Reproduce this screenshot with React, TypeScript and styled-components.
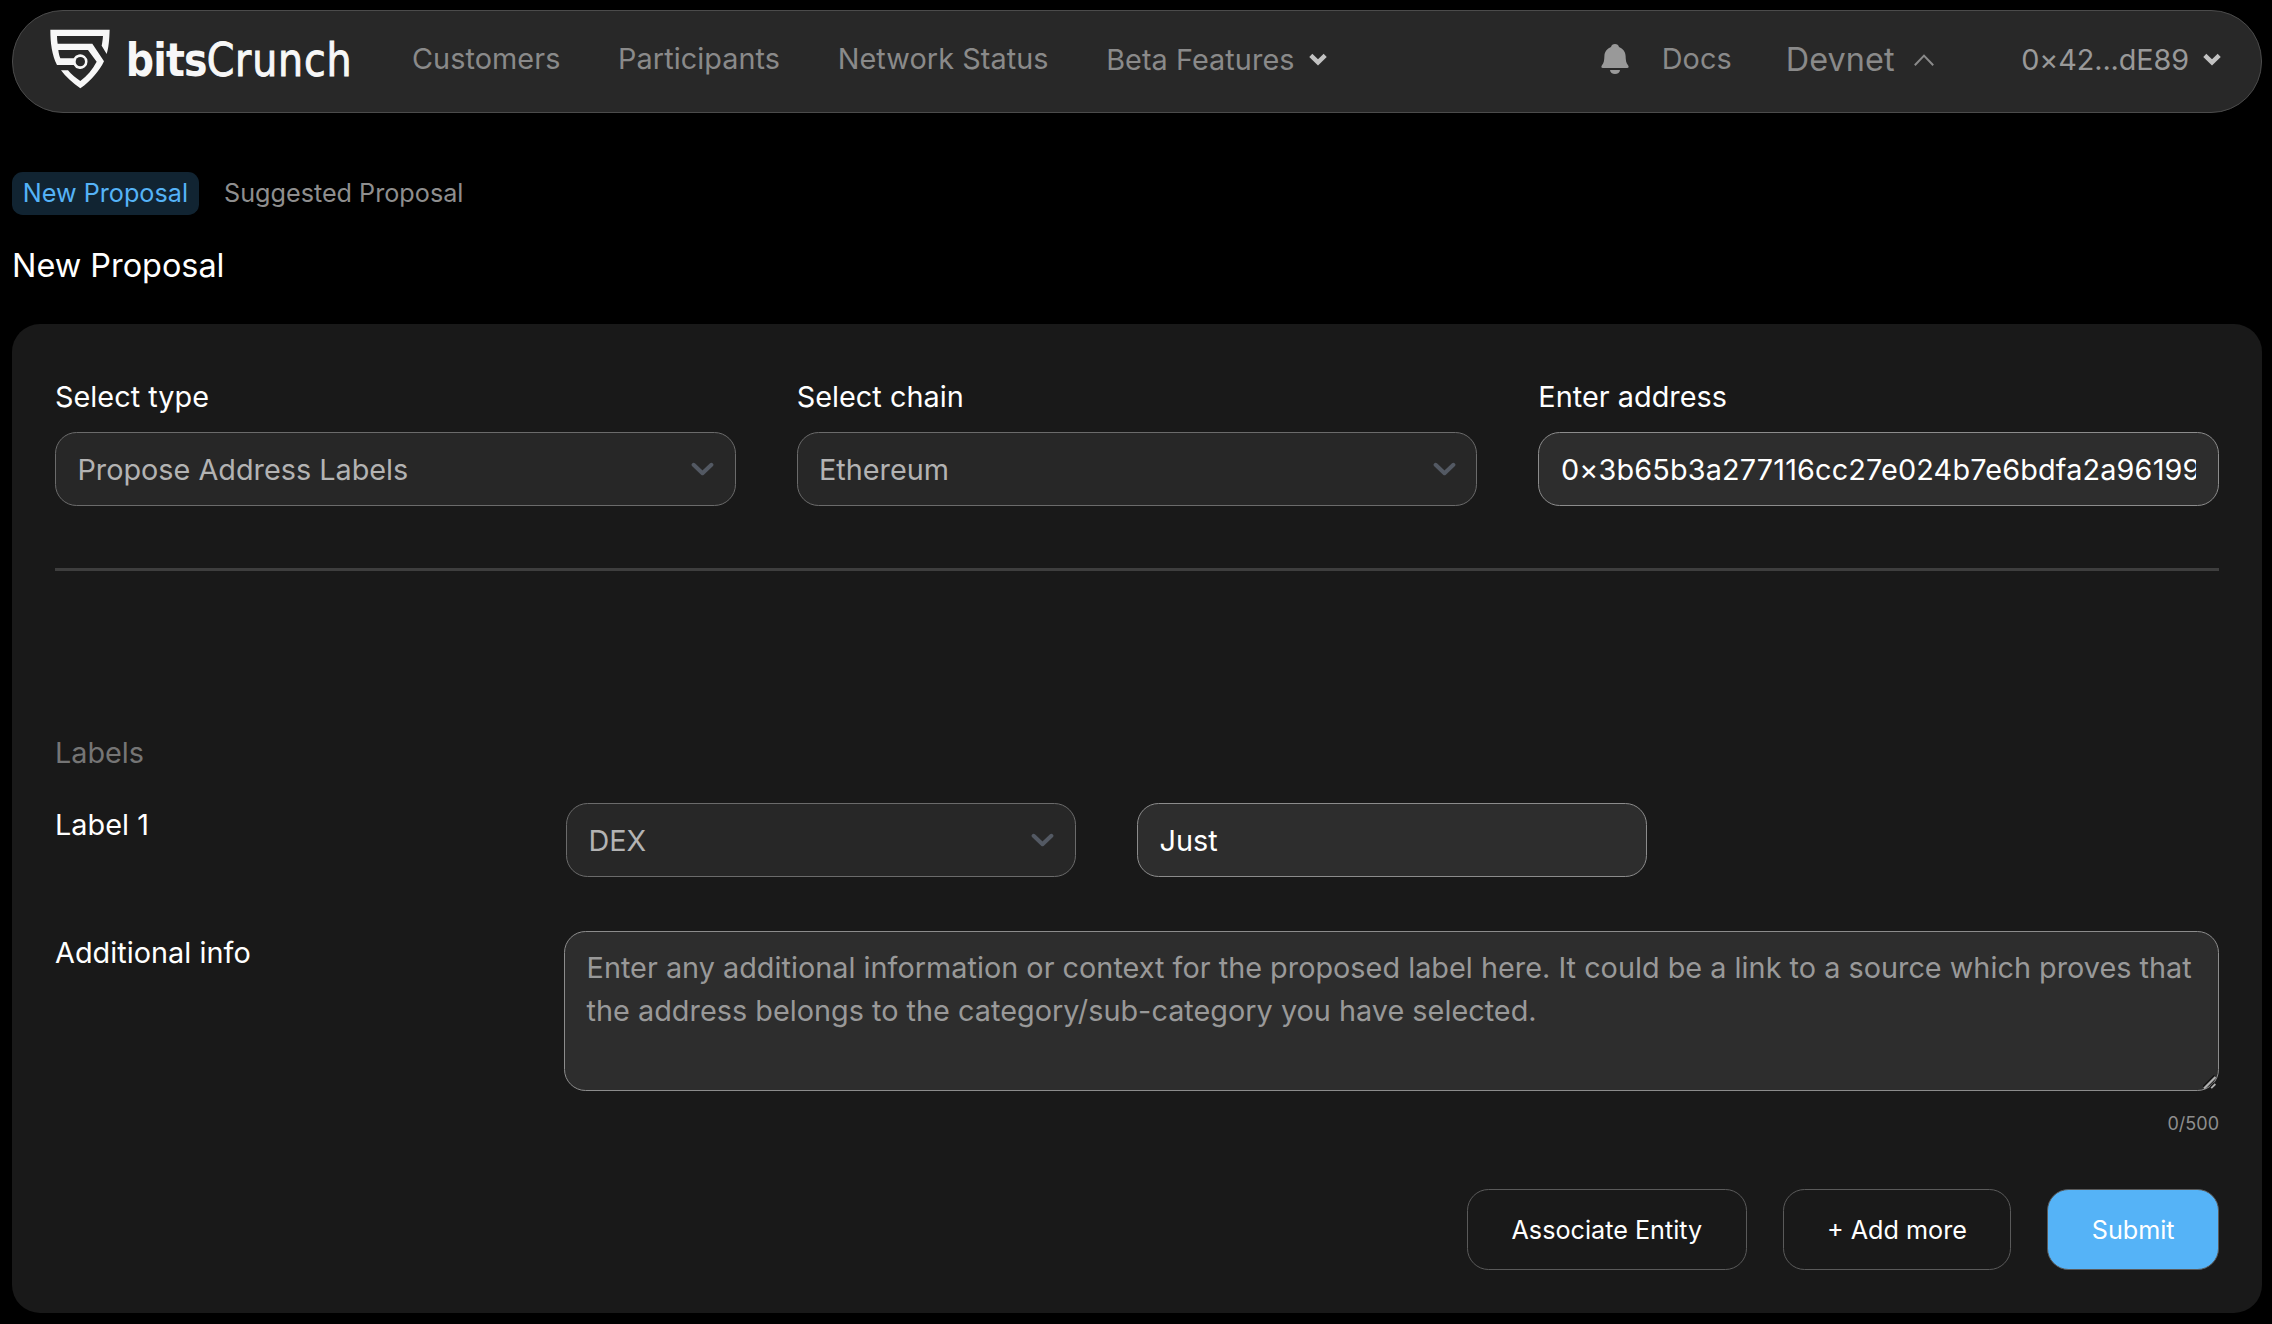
import React from "react";
import styled, { createGlobalStyle } from "styled-components";

const GlobalStyle = createGlobalStyle`
  *, *::before, *::after { box-sizing: border-box; }
  body {
    margin: 0;
    background: #000;
    color: #fff;
    font-family: Inter, "Liberation Sans", sans-serif;
    font-size: 28.8px;
    line-height: 43px;
  }
  input, textarea, button { font: inherit; color: inherit; margin: 0; outline: none; }
`;

const Page = styled.div`
  height: 1324px;
  padding: 10px 10px 0 12px;
  overflow: hidden;
`;

const NavBar = styled.header`
  display: flex;
  align-items: center;
  justify-content: space-between;
  height: 103px;
  padding: 0 40px 6px 37px;
  background: #282828;
  border: 1px solid #4b4b4b;
  border-radius: 51px;
`;

const NavGroup = styled.nav`
  display: flex;
  align-items: center;
`;

const LogoLink = styled.a`
  display: flex;
  margin-right: 60px;
`;

const NavItem = styled.a<{ $gap?: number; $drop?: number; $tone?: string; $size?: number }>`
  display: flex;
  align-items: center;
  margin-left: ${(p) => p.$gap ?? 0}px;
  padding-top: ${(p) => p.$drop ?? 0}px;
  font-size: ${(p) => p.$size ?? 28.8}px;
  letter-spacing: 0.08px;
  color: ${(p) => p.$tone ?? "#8a8a8a"};
  white-space: nowrap;
`;

const Wallet = styled(NavItem)`
  letter-spacing: -0.1px;
`;

const Icon = styled.svg<{ $left?: number }>`
  display: block;
  flex: none;
  margin-left: ${(p) => p.$left ?? 0}px;
`;

const Tabs = styled.div`
  display: flex;
  gap: 14.4px;
  margin-top: 59px;
`;

const Tab = styled.a<{ $active?: boolean }>`
  height: 43px;
  padding: 0 10.8px;
  border-radius: 10.8px;
  font-size: 25.2px;
  line-height: 43px;
  color: ${(p) => (p.$active ? "#55b3f7" : "#8e8e8e")};
  background: ${(p) => (p.$active ? "#112432" : "transparent")};
`;

const Title = styled.h1`
  margin: 27px 0 34px;
  font-size: 32.4px;
  font-weight: 400;
  line-height: 48px;
`;

const Card = styled.main`
  height: 989px;
  padding: 51px 43px 0;
  background: #191919;
  border-radius: 28px;
`;

const FieldGrid = styled.div`
  display: grid;
  grid-template-columns: repeat(3, 1fr);
  gap: 61px;
`;

const Field = styled.div`
  display: flex;
  flex-direction: column;
  gap: 14px;
  min-width: 0;
`;

const Label = styled.label`
  letter-spacing: 0.04px;
`;

const SelectBox = styled.div`
  display: flex;
  align-items: center;
  justify-content: space-between;
  width: 100%;
  height: 74px;
  padding: 0 20.6px 0 21.4px;
  color: #b3b3b3;
  background: #272727;
  border: 1px solid #6b6b6b;
  border-radius: 21.6px;
`;

const TextInput = styled.input<{ $tracking?: number }>`
  width: 100%;
  height: 74px;
  padding: 0 21.6px;
  letter-spacing: ${(p) => p.$tracking ?? 0}px;
  background: #2d2d2d;
  border: 1px solid #8c8c8c;
  border-radius: 21.6px;
`;

const Divider = styled.hr`
  height: 3px;
  margin: 62px 0 0;
  background: #3e3e3e;
  border: 0;
`;

const SectionName = styled.div`
  margin: 160px 0 29px;
  color: #757575;
`;

const FormRow = styled.div<{ $columns: string }>`
  display: grid;
  grid-template-columns: ${(p) => p.$columns};
  align-items: start;
`;

const LabelInputs = styled.div`
  display: grid;
  grid-template-columns: 510px 510px;
  gap: 61px;
  margin-bottom: 54px;
`;

const AreaFrame = styled.div`
  position: relative;
`;

const InfoArea = styled.textarea`
  display: block;
  width: 100%;
  height: 160px;
  padding: 14px 20px 14px 21.6px;
  letter-spacing: 0.02px;
  background: #2d2d2d;
  border: 1px solid #8c8c8c;
  border-radius: 21.6px;
  resize: none;
  &::placeholder { color: #999; opacity: 1; }
`;

const ResizeGrip = styled.svg`
  position: absolute;
  right: 2px;
  bottom: 2px;
`;

const Counter = styled.div`
  margin-top: 19px;
  font-size: 18px;
  line-height: 27px;
  text-align: right;
  color: #8e8e8e;
`;

const Actions = styled.div`
  display: flex;
  justify-content: flex-end;
  gap: 36px;
  margin-top: 52px;
`;

const Button = styled.button<{ $primary?: boolean }>`
  height: 81px;
  padding: 0 43.4px;
  font-size: 25.2px;
  line-height: 38px;
  background: ${(p) => (p.$primary ? "#55b3f7" : "transparent")};
  border: 1px solid #5a5a5a;
  border-radius: 21.6px;
`;

const Logo = () => (
  <Icon width="302" height="62" viewBox="0 0 302 62" fill="#f7f7f7">
    <g transform="translate(-50 -28) scale(0.33333)">
      <path d="M151 89H329C328 120 326 142 320 162L305 137C307 128 308 119 309 108H171C171 116 172 124 173 131H277L312 184C298 213 273 243 241 265C217 249 197 230 183 211H204C214 223 227 234 241 243C261 228 278 208 290 185L264 150H175C176 159 178 168 181 175H221A22 22 0 1 1 221 195H171C156 165 151 130 151 89Z" />
      <circle cx="241" cy="185" r="14" fill="#282828" />
    </g>
    <g transform="translate(75.8 47.8) scale(0.945 1)" fontFamily='"DejaVu Sans Condensed", "DejaVu Sans", sans-serif' fontSize="46.5">
      <text>
        <tspan fontWeight="700" letterSpacing="-0.9">bits</tspan>
        <tspan letterSpacing="0.9" stroke="#f7f7f7" strokeWidth="0.9">Crunch</tspan>
      </text>
    </g>
  </Icon>
);

const BoldChevron = ({ left }: { left: number }) => (
  <Icon $left={left} width="18" height="13" viewBox="0 0 18 13" fill="none" stroke="#c2c2c2" strokeWidth="4.4">
    <path d="M1.8 2.4L9 9.4L16.2 2.4" />
  </Icon>
);

const SelectChevron = () => (
  <Icon width="23" height="14" viewBox="0 0 23 14" fill="none" stroke="#535963" strokeWidth="4" strokeLinecap="round" strokeLinejoin="round">
    <path d="M2.6 2.8L11.5 11.2L20.4 2.8" />
  </Icon>
);

const Bell = () => (
  <Icon width="28" height="32" viewBox="0 0 28 32" fill="#999">
    <path d="M14 1C11.9 1 10.4 2.2 10 4C6 5.5 3.6 8.8 3.4 13C3.2 17.5 3 20 0.8 22.4C0 23.6 0.3 25 1.8 25H26.2C27.7 25 28 23.6 27.2 22.4C25 20 24.8 17.5 24.6 13C24.4 8.8 22 5.5 18 4C17.6 2.2 16.1 1 14 1Z" />
    <path d="M9 27H19C18.8 29.6 16.8 31 14 31S9.2 29.6 9 27Z" />
  </Icon>
);

const Select = ({ value }: { value: string }) => (
  <SelectBox>
    <span>{value}</span>
    <SelectChevron />
  </SelectBox>
);

export default function App() {
  return (
    <>
      <GlobalStyle />
      <Page>
        <NavBar>
          <NavGroup>
            <LogoLink>
              <Logo />
            </LogoLink>
            <NavItem>Customers</NavItem>
            <NavItem $gap={57.6}>Participants</NavItem>
            <NavItem $gap={57.6}>Network Status</NavItem>
            <NavItem $gap={57.6} $drop={2}>
              Beta Features
              <BoldChevron left={14} />
            </NavItem>
          </NavGroup>
          <NavGroup>
            <Bell />
            <NavItem $gap={32.5}>Docs</NavItem>
            <NavItem $gap={54} $size={32.4} $drop={2}>
              Devnet
              <Icon $left={18} width="22" height="14" viewBox="0 0 22 14" fill="none" stroke="#8a8a8a" strokeWidth="2">
                <path d="M1.8 12.2L11 2.6L20.2 12.2" />
              </Icon>
            </NavItem>
            <Wallet $gap={86.5} $drop={2} $tone="#999">
              0×42...dE89
              <BoldChevron left={14} />
            </Wallet>
          </NavGroup>
        </NavBar>

        <Tabs>
          <Tab $active>New Proposal</Tab>
          <Tab>Suggested Proposal</Tab>
        </Tabs>
        <Title>New Proposal</Title>

        <Card>
          <FieldGrid>
            <Field>
              <Label>Select type</Label>
              <Select value="Propose Address Labels" />
            </Field>
            <Field>
              <Label>Select chain</Label>
              <Select value="Ethereum" />
            </Field>
            <Field>
              <Label>Enter address</Label>
              <TextInput $tracking={0.17} defaultValue="0×3b65b3a277116cc27e024b7e6bdfa2a96199" />
            </Field>
          </FieldGrid>
          <Divider />
          <SectionName>Labels</SectionName>
          <FormRow $columns="511px 1fr">
            <Label>Label 1</Label>
            <LabelInputs>
              <Select value="DEX" />
              <TextInput defaultValue="Just" />
            </LabelInputs>
          </FormRow>
          <FormRow $columns="509px 1fr">
            <Label>Additional info</Label>
            <div>
              <AreaFrame>
                <InfoArea placeholder="Enter any additional information or context for the proposed label here. It could be a link to a source which proves that the address belongs to the category/sub-category you have selected." />
                <ResizeGrip width="14" height="14" viewBox="0 0 14 14" fill="none">
                  <path d="M0 12L11.5 0.5" stroke="#111" strokeWidth="1.6" />
                  <path d="M1 13.5L12.5 2" stroke="#b0b0b0" strokeWidth="2.2" />
                  <path d="M7.4 12L11.6 7.8" stroke="#111" strokeWidth="1.4" />
                  <path d="M8.2 13.2L12.4 9" stroke="#b0b0b0" strokeWidth="1.8" />
                </ResizeGrip>
              </AreaFrame>
              <Counter>0/500</Counter>
            </div>
          </FormRow>
          <Actions>
            <Button>Associate Entity</Button>
            <Button>+ Add more</Button>
            <Button $primary>Submit</Button>
          </Actions>
        </Card>
      </Page>
    </>
  );
}
